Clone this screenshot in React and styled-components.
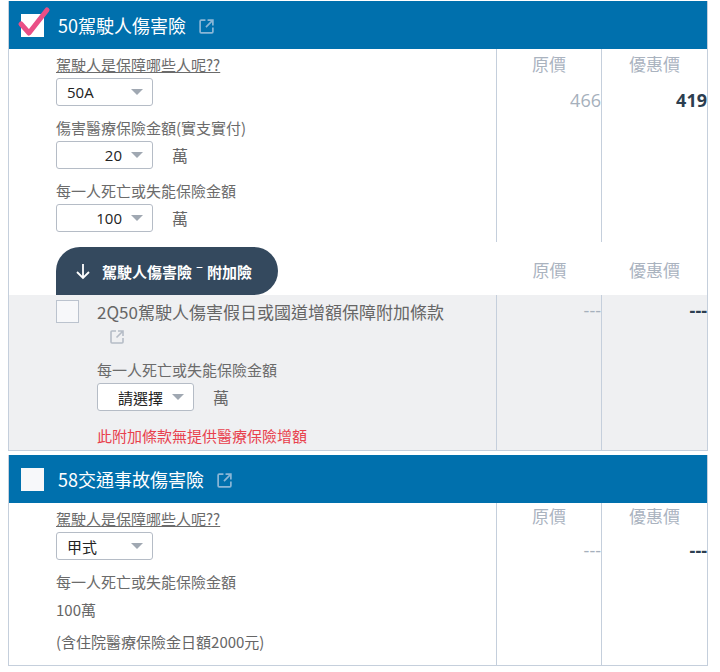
import React from "react";
import styled, { createGlobalStyle } from "styled-components";

const G = createGlobalStyle`
  body { margin: 0; padding: 1px 12px 0 8px; background: #fff; font-family: "Noto Sans CJK TC", "Noto Sans", sans-serif; color: #555; }
`;
const Card = styled.div`
  border-left: 1px solid #c5cfdc; border-right: 1px solid #c5cfdc;
  border-bottom: 1px solid #c5cfdc; margin-bottom: 4px;
`;
const Header = styled.div`
  height: 48px; background: #0070ad; display: flex; align-items: center;
  padding-left: 12px; gap: 14px; color: #fff; font-size: 18px;
`;
const Box = styled.div`
  width: 23px; height: 23px; background: ${p => p.$gray ? "#f7f8fa" : "#fff"};
  border: ${p => p.$border ? "1px solid #bbc3ce" : "none"}; box-sizing: border-box;
  position: relative; flex: none;
`;
const Check = styled.svg`position: absolute; left: -4px; top: -9px;`;
const Row = styled.div`
  display: grid; grid-template-columns: 1fr 105px 105px;
  background: ${p => p.$bg || "#fff"};
`;
const Left = styled.div`
  padding: ${p => p.$pad || "5px 0 0 47px"}; display: flex; flex-direction: column; align-items: flex-start;
  border-right: ${p => p.$noline ? "none" : "1px solid #c5cfdc"};
  min-height: ${p => p.$h || 0}px; box-sizing: border-box;
`;
const Col = styled.div`
  border-right: ${p => p.$last || p.$noline ? "none" : "1px solid #c5cfdc"};
  display: flex; flex-direction: column; align-items: stretch; ${p => p.$end ? "justify-content:flex-end;" : ""}
`;
const ColHead = styled.div`
  text-align: center; color: #aab3bf; font-size: 17px; line-height: 24px; padding: ${p => p.$pad || "0"};
`;
const Price = styled.div`
  text-align: right; font-family: "Open Sans", sans-serif; font-size: 18px; line-height: 24px;
  color: ${p => p.$bold ? "#2c3e50" : "#a6b0bc"}; font-weight: ${p => p.$bold ? 700 : 400};
  margin-top: ${p => p.$mt}px; padding-right: ${p => p.$pr || 0}px;
`;
const Label = styled.div`
  font-size: 15px; line-height: 22px; color: #6b6b6b; margin-top: ${p => p.$mt || 0}px;
  text-decoration: ${p => p.$u ? "underline" : "none"};
`;
const SelRow = styled.div`display: flex; align-items: center; gap: 19px; margin-top: ${p => p.$mt || 2}px; font-size: 16px; color: #666;`;
const Select = styled.div`
  width: 97px; height: 28px; border: 1px solid #b5bcc6; border-radius: 3px; box-sizing: border-box;
  display: flex; align-items: center; justify-content: ${p => p.$left ? "flex-start" : "flex-end"};
  padding: 0 9px 0 ${p => p.$left ? 10 : 0}px; background: #fff; font-size: 15px; color: #222; gap: 6px;
  font-family: "Open Sans", "Noto Sans CJK TC", sans-serif;
  & > span { flex: ${p => p.$left ? 1 : "none"}; }
`;
const Caret = styled.i`
  width: 0; height: 0; border-left: 6px solid transparent; border-right: 6px solid transparent;
  border-top: 6px solid #a0a8b2; margin-left: 3px;
`;
const Pill = styled.div`
  height: 48px; background: #34495e; color: #fff; border-radius: 24px 24px 24px 0;
  display: inline-flex; align-items: center; gap: 10px; padding: 0 26px 0 18px;
  font-size: 15px; font-weight: 700; width: fit-content;
`;
const AddTitle = styled.div`font-size: 17px; line-height: 24px; color: #666; max-width: 350px;`;
const Red = styled.div`color: #e8414d; font-size: 15px; margin-top: 14px;`;
const Plain = styled.div`font-size: 15px; color: #666; margin-top: ${p => p.$mt}px;`;

const Ext = ({ c = "#8ab6d6", s = 17 }) => (
  <svg width={s} height={s} viewBox="0 0 16 16" fill="none" stroke={c} strokeWidth="1.6" style={{ marginLeft: 12, verticalAlign: -2 }}>
    <path d="M7 2H3a1 1 0 0 0-1 1v10a1 1 0 0 0 1 1h10a1 1 0 0 0 1-1V9" />
    <path d="M9 2h5v5M14 2L7.5 8.5" />
  </svg>
);

const Sel = ({ v, left }) => (
  <Select $left={left}><span>{v}</span><Caret /></Select>
);

export default function App() {
  return (
    <>
      <G />
      <Card>
        <Header>
          <Box>
            <Check width="34" height="34" viewBox="0 0 34 34"><path d="M4 19l8 9L30 5" stroke="#ea4f86" strokeWidth="5" fill="none" strokeLinecap="round" strokeLinejoin="round" /></Check>
          </Box>
          <span>50駕駛人傷害險<Ext /></span>
        </Header>
        <Row>
          <Left $h={193}>
            <Label $u>駕駛人是保障哪些人呢??</Label>
            <SelRow><Sel v="50A" left /></SelRow>
            <Label $mt={11}>傷害醫療保險金額(實支實付)</Label>
            <SelRow><Sel v="20" /><span>萬</span></SelRow>
            <Label $mt={11}>每一人死亡或失能保險金額</Label>
            <SelRow><Sel v="100" /><span>萬</span></SelRow>
          </Left>
          <Col><ColHead $pad="3px 0 0">原價</ColHead><Price $mt={12}>466</Price></Col>
          <Col $last><ColHead $pad="3px 0 0">優惠價</ColHead><Price $mt={12} $bold>419</Price></Col>
        </Row>
        <Row>
          <Left $noline $pad="5px 0 0 47px"><Pill><svg width="18" height="18" viewBox="0 0 18 18" fill="none" stroke="#fff" strokeWidth="1.8"><path d="M9 2v14M3 10l6 6 6-6" /></svg>駕駛人傷害險ˉ附加險</Pill></Left>
          <Col $noline $end><ColHead $pad="0 0 13px">原價</ColHead></Col>
          <Col $last $end><ColHead $pad="0 0 13px">優惠價</ColHead></Col>
        </Row>
        <Row $bg="#eff0f2">
          <Left $h={155} $pad="5px 0 0 47px">
            <div style={{ display: "flex", gap: 18 }}>
              <Box $border $gray />
              <div>
                <AddTitle>2Q50駕駛人傷害假日或國道增額保障附加條款<Ext c="#b5bcc6" s={16} /></AddTitle>
                <Label $mt={11}>每一人死亡或失能保險金額</Label>
                <SelRow><Select><span>請選擇</span><Caret /></Select><span>萬</span></SelRow>
                <Red>此附加條款無提供醫療保險增額</Red>
              </div>
            </div>
          </Left>
          <Col><Price $mt={3}>---</Price></Col>
          <Col $last><Price $mt={3} $bold>---</Price></Col>
        </Row>
      </Card>
      <Card>
        <Header>
          <Box $gray />
          <span>58交通事故傷害險<Ext /></span>
        </Header>
        <Row>
          <Left $h={162}>
            <Label $u>駕駛人是保障哪些人呢??</Label>
            <SelRow><Sel v="甲式" left /></SelRow>
            <Label $mt={11}>每一人死亡或失能保險金額</Label>
            <Plain $mt={6}>100萬</Plain>
            <Plain $mt={11}>(含住院醫療保險金日額2000元)</Plain>
          </Left>
          <Col><ColHead $pad="1px 0 0">原價</ColHead><Price $mt={10}>---</Price></Col>
          <Col $last><ColHead $pad="1px 0 0">優惠價</ColHead><Price $mt={10} $bold>---</Price></Col>
        </Row>
      </Card>
    </>
  );
}
